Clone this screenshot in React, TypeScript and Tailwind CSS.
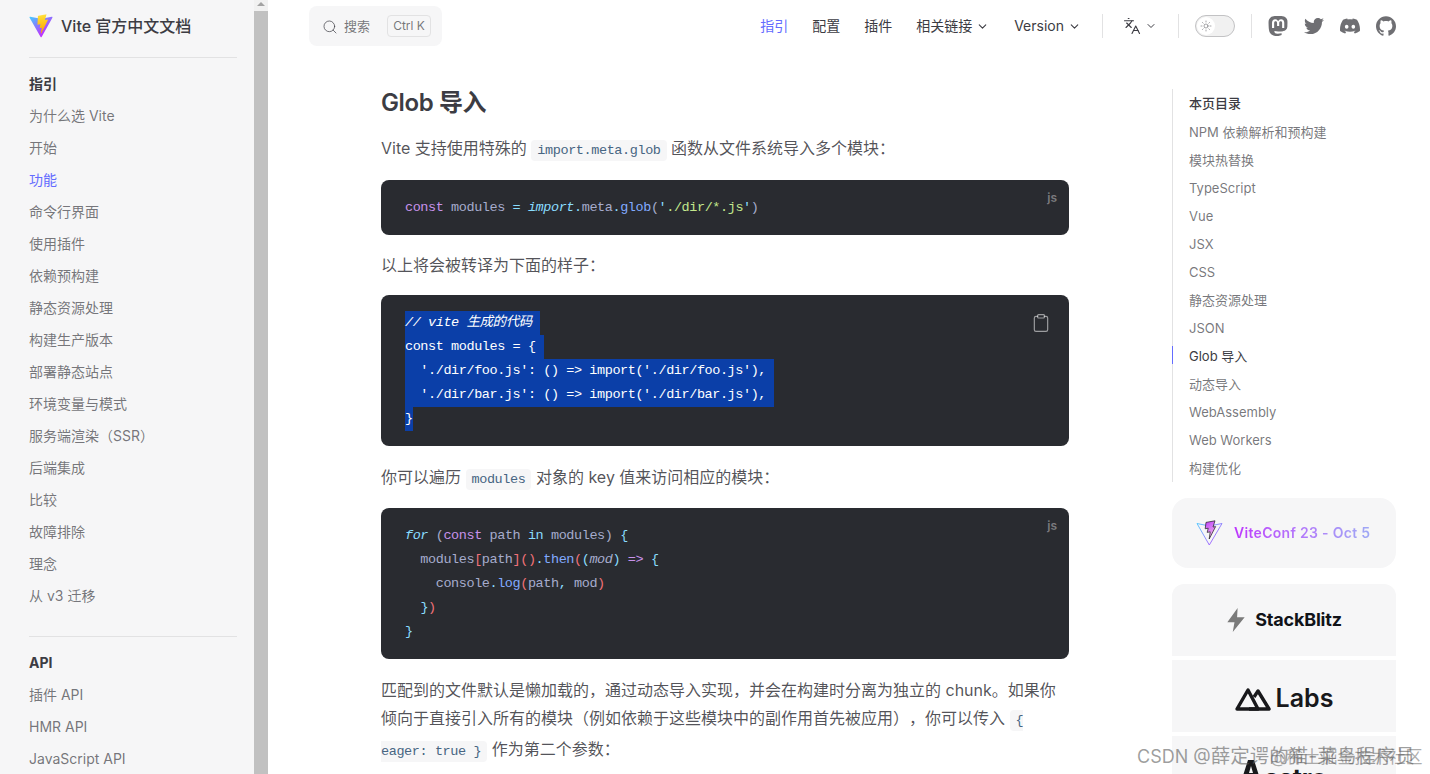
import React from 'react';
import { ChevronDown, Clipboard, Search, Sun, Languages } from 'lucide-react';
import { SiDiscord, SiGithub, SiMastodon } from 'react-icons/si';
import { FaTwitter } from 'react-icons/fa';

const sans = 'font-["Inter","Noto_Sans_CJK_SC",sans-serif]';
const mono = 'font-["Liberation_Mono","Noto_Sans_CJK_SC",monospace]';

const guide = ['为什么选 Vite', '开始', '功能', '命令行界面', '使用插件', '依赖预构建', '静态资源处理', '构建生产版本', '部署静态站点', '环境变量与模式', '服务端渲染（SSR）', '后端集成', '比较', '故障排除', '理念', '从 v3 迁移'];
const api = ['插件 API', 'HMR API', 'JavaScript API'];
const outline = ['NPM 依赖解析和预构建', '模块热替换', 'TypeScript', 'Vue', 'JSX', 'CSS', '静态资源处理', 'JSON', 'Glob 导入', '动态导入', 'WebAssembly', 'Web Workers', '构建优化'];

const ViteLogo = () => (
  <svg width="24" height="24" viewBox="0 0 410 404" fill="none">
    <path d="M399.641 59.525L215.643 388.545c-3.799 6.793-13.559 6.833-17.415.073L10.582 59.556C6.38 52.19 12.68 43.266 21.028 44.76l184.195 32.923c1.175.21 2.378.208 3.553-.006l180.343-32.87c8.32-1.517 14.649 7.337 10.522 14.718z" fill="url(#vl1)" />
    <path d="M292.965 1.574L156.801 28.255c-2.238.439-3.895 2.335-4.03 4.611l-8.376 141.464c-.197 3.332 2.863 5.918 6.115 5.168l37.91-8.749c3.547-.818 6.752 2.306 6.023 5.873l-11.263 55.153c-.758 3.712 2.727 6.886 6.352 5.785l23.415-7.114c3.63-1.102 7.118 2.081 6.35 5.796l-17.899 86.633c-1.12 5.419 6.088 8.374 9.094 3.728l2.008-3.103L323.345 100.2c1.858-3.707-1.346-7.935-5.422-7.148l-38.984 7.524c-3.663.707-6.78-2.705-5.746-6.288l25.444-88.2c1.034-3.589-2.09-7.003-5.756-6.29z" fill="url(#vl2)" />
    <defs>
      <linearGradient id="vl1" x1="6" y1="33" x2="235" y2="344" gradientUnits="userSpaceOnUse"><stop stopColor="#41D1FF" /><stop offset="1" stopColor="#BD34FE" /></linearGradient>
      <linearGradient id="vl2" x1="194" y1="8" x2="236" y2="292" gradientUnits="userSpaceOnUse"><stop stopColor="#FFEA83" /><stop offset=".08" stopColor="#FFDD35" /><stop offset="1" stopColor="#FFA800" /></linearGradient>
    </defs>
  </svg>
);

const ConfLogo = () => (
  <svg width="27" height="26" viewBox="0 0 27 26" fill="none">
    <defs>
      <linearGradient id="cl1" x1="0" y1="0" x2="27" y2="26" gradientUnits="userSpaceOnUse"><stop stopColor="#41D1FF" /><stop offset="1" stopColor="#BD34FE" /></linearGradient>
      <linearGradient id="cl2" x1="8" y1="0" x2="20" y2="18" gradientUnits="userSpaceOnUse"><stop stopColor="#bd34fe" /><stop offset="1" stopColor="#f4c8e8" /></linearGradient>
    </defs>
    <path d="M1 3.5L13.3 25 26 3.5 13.5 6z" stroke="url(#cl1)" strokeWidth="0.9" strokeLinejoin="round" />
    <path d="M10 2.4L19 .8l-2 6.2 2.6-.4-6.4 12.4 1-7.2-3 .6 1-4.2-3 .6z" fill="url(#cl2)" stroke="#1b1b1f" strokeWidth="0.7" strokeLinejoin="round" />
  </svg>
);

const SideItem = ({ label }: { label: string }) => (
  <div className={`h-8 leading-8 text-sm ${label === '功能' ? 'text-[#646cff]' : 'text-[#3c3c43b3]'}`}>{label}</div>
);

const NavMore = ({ label }: { label: string }) => (
  <div className="flex items-center gap-[4px] text-sm text-[#3c3c43]">
    {label}
    <ChevronDown size={13} strokeWidth={2} />
  </div>
);

const Sep = () => <div className="w-px h-6 bg-[#e2e2e3]" />;

const InlineCode = ({ children }: { children: React.ReactNode }) => (
  <code className={`${mono} text-[13.5px] tracking-[-0.4px] text-[#476582] bg-[#f6f6f7] rounded px-[6px] py-[3px]`}>{children}</code>
);

const CodeBlock = ({ children, lang, className }: { children: React.ReactNode; lang?: boolean; className?: string }) => (
  <div className={`relative bg-[#292b30] rounded-lg pl-[24px] pt-[16px] pb-[15px] text-[13.5px] tracking-[-0.42px] leading-6 whitespace-pre text-[#a6accd] ${mono} ${className ?? 'mb-4'}`}>
    {lang && <span className={`absolute top-[10px] right-[12px] text-xs font-semibold tracking-normal text-[#ffffff61] ${sans}`}>js</span>}
    {children}
  </div>
);

const Sel = ({ children }: { children: React.ReactNode }) => (
  <div className="w-fit h-6 bg-[#0b3fa8] text-white pr-[8px]">{children}</div>
);

export default function App() {
  return (
    <div className={`flex h-[774px] overflow-hidden bg-white ${sans}`}>
      {/* sidebar */}
      <aside className="w-[268px] shrink-0 flex bg-[#f6f6f7]">
        <div className="w-[254px] pl-[29px] pr-[17px]">
          <div className="h-[58px] pb-[5px] flex items-center gap-[8px] border-b border-[#e2e2e3]">
            <ViteLogo />
            <span className="text-base font-medium text-[#3c3c43]">Vite 官方中文文档</span>
          </div>
          <div className="pt-[10px] pb-[24px] border-b border-[#e2e2e3]">
            <div className="h-8 leading-8 text-sm font-bold text-[#3c3c43]">指引</div>
            {guide.map(g => <SideItem key={g} label={g} />)}
          </div>
          <div className="pt-[10px]">
            <div className="h-8 leading-8 text-sm font-bold text-[#3c3c43]">API</div>
            {api.map(g => <SideItem key={g} label={g} />)}
          </div>
        </div>
        <div className="w-[14px] bg-[#f1f1f1] flex flex-col">
          <div className="h-[11px] flex justify-center pt-[2px]">
            <div className="w-0 h-0 border-x-[4px] border-x-transparent border-b-[4px] border-b-[#a3a3a3]" />
          </div>
          <div className="flex-1 bg-[#c1c1c1]" />
        </div>
      </aside>

      <div className="flex-1 min-w-0 flex flex-col">
        {/* top bar */}
        <header className="h-[54px] shrink-0 pl-[41px] pr-[34px] flex items-start justify-between">
          <div className="mt-[6px] w-[133px] h-10 bg-[#f6f6f7] rounded-lg flex items-center pl-[13px]">
            <Search size={16} strokeWidth={1.5} className="text-[#3c3c43b3] mt-[1px]" />
            <span className="ml-[6px] mt-[1px] text-[13px] text-[#3c3c43b3]">搜索</span>
            <span className="ml-[17px] w-[44px] h-[22px] border border-[#e2e2e3] rounded text-xs text-[#3c3c43b3] flex items-center justify-center">Ctrl K</span>
          </div>
          <nav className="h-[52px] flex items-center">
            <span className="text-sm text-[#646cff]">指引</span>
            <span className="ml-6 text-sm text-[#3c3c43]">配置</span>
            <span className="ml-6 text-sm text-[#3c3c43]">插件</span>
            <div className="ml-6"><NavMore label="相关链接" /></div>
            <div className="ml-[25px]"><NavMore label="Version" /></div>
            <div className="ml-[21px]"><Sep /></div>
            <div className="ml-[20px] flex items-center gap-[4px] text-[#3c3c43]">
              <Languages size={18} strokeWidth={1.5} />
              <ChevronDown size={12} strokeWidth={2} />
            </div>
            <div className="ml-[21px]"><Sep /></div>
            <div className="ml-[16px] w-10 h-[22px] rounded-full border border-[#c2c2c4] bg-[#f1f1f1] p-px">
              <div className="w-[18px] h-[18px] rounded-full bg-white flex items-center justify-center">
                <Sun size={12} strokeWidth={1.3} className="text-[#3c3c43b3]" />
              </div>
            </div>
            <div className="ml-[16px]"><Sep /></div>
            <div className="ml-[16px] flex items-center gap-[16px] text-[#6f6f73]">
              <SiMastodon size={20} />
              <FaTwitter size={20} />
              <SiDiscord size={20} />
              <SiGithub size={20} />
            </div>
          </nav>
        </header>

        <div className="flex-1 min-h-0 flex items-start overflow-hidden pl-[113px]">
          {/* article */}
          <main className="w-[688px] shrink-0 pt-[31px] text-base leading-7 text-[#3c3c43e0]">
            <h2 className="h-9 leading-9 text-2xl font-semibold mb-[13px] tracking-[-0.4px] text-[#3c3c43]">Glob 导入</h2>
            <p className="mb-[15px]">Vite 支持使用特殊的 <InlineCode>import.meta.glob</InlineCode> 函数从文件系统导入多个模块：</p>
            <CodeBlock lang>
              <span className="text-[#c792ea]">const</span> modules <span className="text-[#89ddff]">=</span> <span className="italic text-[#89ddff]">import</span><span className="text-[#89ddff]">.</span>meta<span className="text-[#89ddff]">.</span><span className="text-[#82aaff]">glob</span>(<span className="text-[#89ddff]">'</span><span className="text-[#c3e88d]">./dir/*.js</span><span className="text-[#89ddff]">'</span>)
            </CodeBlock>
            <p className="mb-4">以上将会被转译为下面的样子：</p>
            <CodeBlock className="mb-[17px]">
              <div className="absolute top-[18px] right-[18px] text-[#ffffff8a]"><Clipboard size={20} strokeWidth={1.4} /></div>
              <Sel><span className="italic">// vite 生成的代码</span></Sel>
              <Sel>const modules = {'{'}</Sel>
              <Sel>{"  './dir/foo.js': () => import('./dir/foo.js'),"}</Sel>
              <Sel>{"  './dir/bar.js': () => import('./dir/bar.js'),"}</Sel>
              <div className="w-[8px] h-6 bg-[#0b3fa8] text-white">{'}'}</div>
            </CodeBlock>
            <p className="mb-[14px]">你可以遍历 <InlineCode>modules</InlineCode> 对象的 key 值来访问相应的模块：</p>
            <CodeBlock lang className="mb-[17px]">
              <div><span className="italic text-[#89ddff]">for</span> (<span className="text-[#c792ea]">const</span> path <span className="text-[#89ddff]">in</span> modules) <span className="text-[#89ddff]">{'{'}</span></div>
              <div>  modules<span className="text-[#f07178]">[</span>path<span className="text-[#f07178]">]()</span><span className="text-[#89ddff]">.</span><span className="text-[#82aaff]">then</span><span className="text-[#f07178]">(</span><span className="text-[#89ddff]">(</span><span className="italic">mod</span><span className="text-[#89ddff]">)</span> <span className="text-[#c792ea]">=&gt;</span> <span className="text-[#89ddff]">{'{'}</span></div>
              <div>    console<span className="text-[#89ddff]">.</span><span className="text-[#82aaff]">log</span><span className="text-[#f07178]">(</span>path<span className="text-[#89ddff]">,</span> mod<span className="text-[#f07178]">)</span></div>
              <div>  <span className="text-[#89ddff]">{'}'}</span><span className="text-[#f07178]">)</span></div>
              <div><span className="text-[#89ddff]">{'}'}</span></div>
            </CodeBlock>
            <p className="[text-spacing-trim:space-all]">匹配到的文件默认是懒加载的，通过动态导入实现，并会在构建时分离为独立的 chunk。如果你倾向于直接引入所有的模块（例如依赖于这些模块中的副作用首先被应用），你可以传入 <InlineCode>{'{ eager: true }'}</InlineCode> 作为第二个参数：</p>
          </main>

          {/* right column */}
          <div className="ml-[103px] w-[224px] shrink-0 pt-[36px]">
            <div className="relative border-l border-[#e2e2e3] pl-[16px] text-[13px] leading-7 text-[#3c3c43b3]">
              <div className="absolute -left-px top-[257px] w-px h-[18px] bg-[#646cff]" />
              <div className="font-medium text-[#3c3c43] -mt-px mb-px">本页目录</div>
              {outline.map(o => (
                <div key={o} className={o === 'Glob 导入' ? 'text-[#3c3c43]' : ''}>{o}</div>
              ))}
            </div>
            <div className="mt-4 h-[70px] bg-[#f6f6f7] rounded-2xl flex items-center pl-[24px] gap-[11px]">
              <ConfLogo />
              <span className="text-sm font-semibold tracking-[0.3px] bg-gradient-to-r from-[#bd34fe] to-[#9ea8f5] bg-clip-text text-transparent">ViteConf 23 - Oct 5</span>
            </div>
            <div className="mt-4 flex flex-col gap-1 rounded-t-xl overflow-hidden">
              <div className="h-[72px] bg-[#f6f6f7] flex items-center justify-center gap-[9px]">
                <svg width="20" height="26" viewBox="0 0 18 24" className="text-[#7a7a7a]"><path fill="currentColor" d="M10.5 1L1 14h6.6L6 23l11-13.5h-7z" /></svg>
                <span className="text-[18px] leading-none font-bold text-[#111318] tracking-[-0.2px]">StackBlitz</span>
              </div>
              <div className="h-[72px] bg-[#f6f6f7] flex items-center justify-center gap-[5px] pt-[5px]">
                <svg width="36" height="24" viewBox="0 0 36 24" fill="none" stroke="#18181b" strokeWidth="3.4" strokeLinejoin="round"><path d="M2 22L13 3l10 19z" /><path d="M19 10l4-6 11 18H14" /></svg>
                <span className="text-[25px] leading-none font-semibold text-[#18181b]">Labs</span>
              </div>
              <div className="h-[72px] bg-[#f6f6f7] flex items-start justify-center pt-[24px] gap-[3px]">
                <svg width="20" height="26" viewBox="0 0 20 26"><path fill="#18181b" d="M7 0h6l7 22-6-3-1-3H7l-1 3-6 3zM10 6l-2 7h4z" /></svg>
                <span className="text-[25px] leading-7 font-bold text-[#18181b] mt-[4px]">astro</span>
              </div>
            </div>
          </div>
        </div>
      </div>

      {/* CSDN watermark */}
      <div className="absolute left-[1137px] top-[744px] text-[18px] leading-6 whitespace-nowrap text-[#5c5c5c99]">CSDN @<span className="text-[19.5px]">薛定谔的猫-菜鸟程序员</span></div>
      <div className="absolute left-[1270px] top-[745px] text-[17px] leading-6 whitespace-nowrap text-[#5c5c5c80]">@稀土掘金技术社区</div>
    </div>
  );
}
